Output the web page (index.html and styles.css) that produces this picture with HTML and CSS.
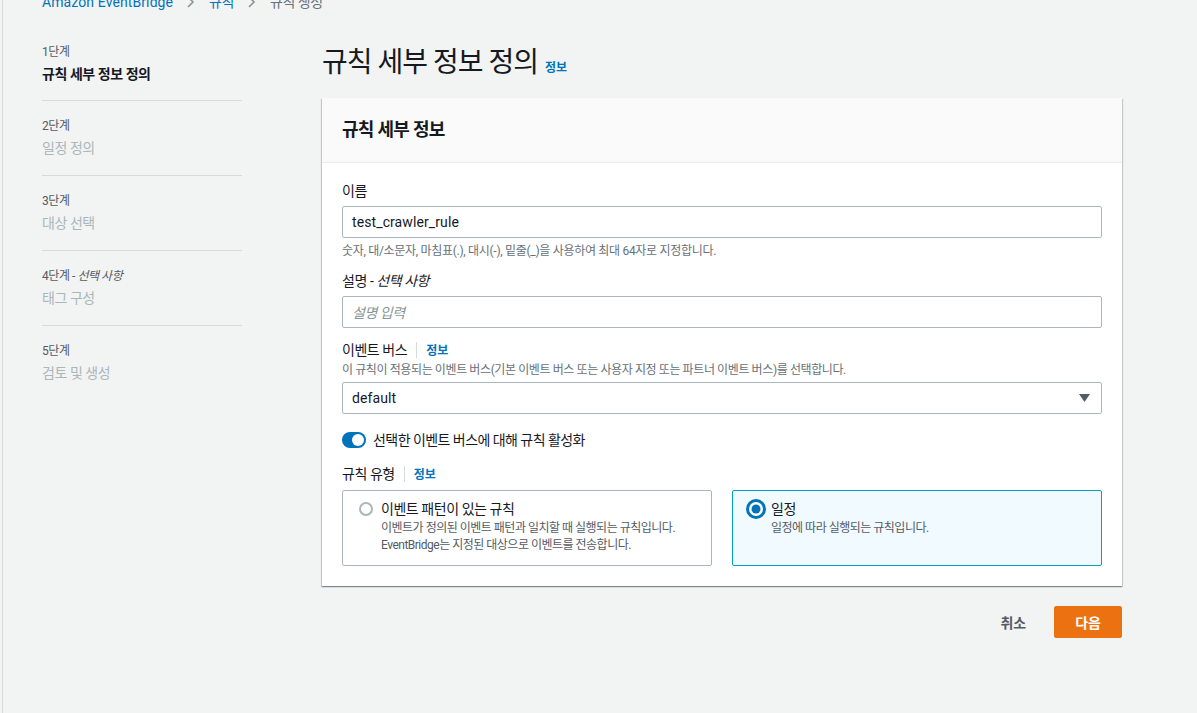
FILE: index.html
```html
<!DOCTYPE html>
<html lang="ko">
<head>
<meta charset="utf-8">
<title>규칙 생성</title>
<link rel="stylesheet" href="styles.css">
</head>
<body>
<div class="app">
  <nav class="breadcrumb">
    <a class="crumb-link latin" href="#">Amazon EventBridge</a>
    <svg class="chev" width="10" height="12" viewBox="0 0 10 12"><path d="M2 1l5 5-5 5" fill="none" stroke="#879596" stroke-width="1.6"/></svg>
    <a class="crumb-link" href="#">규칙</a>
    <svg class="chev" width="10" height="12" viewBox="0 0 10 12"><path d="M2 1l5 5-5 5" fill="none" stroke="#879596" stroke-width="1.6"/></svg>
    <span class="crumb-current">규칙 생성</span>
  </nav>
  <div class="layout">
    <aside class="steps">
      <div class="step">
        <div class="step-label">1단계</div>
        <div class="step-name current">규칙 세부 정보 정의</div>
      </div>
      <div class="step">
        <div class="step-label">2단계</div>
        <div class="step-name">일정 정의</div>
      </div>
      <div class="step">
        <div class="step-label">3단계</div>
        <div class="step-name">대상 선택</div>
      </div>
      <div class="step">
        <div class="step-label">4단계 - <i>선택 사항</i></div>
        <div class="step-name">태그 구성</div>
      </div>
      <div class="step last">
        <div class="step-label">5단계</div>
        <div class="step-name">검토 및 생성</div>
      </div>
    </aside>
    <main class="main">
      <h1 class="page-title">규칙 세부 정보 정의 <a class="info" href="#">정보</a></h1>
      <section class="card">
        <header class="card-header"><h2>규칙 세부 정보</h2></header>
        <div class="card-body">
          <div class="field">
            <div class="label">이름</div>
            <div class="input latin">test_crawler_rule</div>
            <div class="hint">숫자, 대/소문자, 마침표(.), 대시(-), 밑줄(_)을 사용하여 최대 64자로 지정합니다.</div>
          </div>
          <div class="field">
            <div class="label">설명 - <i>선택 사항</i></div>
            <div class="input placeholder">설명 입력</div>
          </div>
          <div class="field">
            <div class="label">이벤트 버스<span class="divider"></span><a class="info" href="#">정보</a></div>
            <div class="desc">이 규칙이 적용되는 이벤트 버스(기본 이벤트 버스 또는 사용자 지정 또는 파트너 이벤트 버스)를 선택합니다.</div>
            <div class="input select latin">default
              <svg width="11" height="8" viewBox="0 0 11 8"><path d="M0 0h11L5.5 8z" fill="#545b64"/></svg>
            </div>
          </div>
          <div class="toggle-row">
            <span class="toggle"><span class="knob"></span></span>
            <span>선택한 이벤트 버스에 대해 규칙 활성화</span>
          </div>
          <div class="field type-field">
            <div class="label">규칙 유형<span class="divider"></span><a class="info" href="#">정보</a></div>
            <div class="tiles">
              <div class="tile">
                <span class="radio-slot"><span class="radio"></span></span>
                <div class="tile-text">
                  <div class="tile-title">이벤트 패턴이 있는 규칙</div>
                  <div class="tile-desc">이벤트가 정의된 이벤트 패턴과 일치할 때 실행되는 규칙입니다.<br>EventBridge는 지정된 대상으로 이벤트를 전송합니다.</div>
                </div>
              </div>
              <div class="tile selected">
                <span class="radio-slot">
                  <svg width="20" height="20" viewBox="0 0 20 20"><circle cx="10" cy="10" r="10" fill="#0073bb"/><circle cx="10" cy="10" r="7" fill="#fff"/><circle cx="10" cy="10" r="4.5" fill="#0073bb"/></svg>
                </span>
                <div class="tile-text">
                  <div class="tile-title">일정</div>
                  <div class="tile-desc">일정에 따라 실행되는 규칙입니다.</div>
                </div>
              </div>
            </div>
          </div>
        </div>
      </section>
      <div class="actions">
        <button class="btn-link">취소</button>
        <button class="btn-primary">다음</button>
      </div>
    </main>
  </div>
</div>
</body>
</html>
```

FILE: styles.css
```css
* { box-sizing: border-box; }
html, body { margin: 0; padding: 0; }
body {
  background: #f2f3f3;
  font-family: "Roboto", "Noto Sans CJK KR", sans-serif;
  color: #16191f;
  font-size: 14px;
  letter-spacing: -0.45px;
  overflow: hidden;
}
a { text-decoration: none; }
.latin { letter-spacing: 0.1px; }
.app {
  display: flow-root;
  margin-left: 2px;
  border-left: 1px solid #d5dbdb;
  min-height: 100vh;
  padding-left: 39px;
}
.breadcrumb {
  display: flex;
  align-items: center;
  gap: 13px;
  height: 22px;
  margin-top: -9px;
  font-size: 14px;
  line-height: 22px;
}
.crumb-link { color: #0073bb; }
.crumb-current { color: #687078; }
.layout {
  display: flex;
  gap: 80px;
  margin-top: 29px;
}
.steps { width: 200px; flex: none; }
.step {
  padding: 16px 0;
  border-bottom: 1px solid #d5dbdb;
}
.step:first-child { padding-top: 1px; padding-bottom: 15px; }
.step.last { border-bottom: none; }
.step-label {
  font-size: 12px;
  line-height: 16px;
  color: #545b64;
  margin-bottom: 4px;
  padding-top: 1px;
  height: 17px;
}
.step-name {
  font-size: 14px;
  line-height: 22px;
  color: #aab7b8;
  margin-top: -1px;
}
.step-name.current { color: #16191f; font-weight: 700; }
.main { width: 800px; flex: none; }
.page-title {
  margin: 0 0 17px;
  height: 39px;
  padding-top: 3px;
  font-size: 28px;
  line-height: 36px;
  font-weight: 400;
  letter-spacing: -1px;
}
.page-title .info {
  font-size: 12px;
  line-height: 1;
  margin-left: 1px;
  letter-spacing: 0;
  vertical-align: baseline;
}
.info {
  color: #0073bb;
  font-size: 12px;
  font-weight: 700;
  letter-spacing: 0;
}
.card {
  background: #fff;
  box-shadow: 0 1px 1px 0 rgba(0,28,36,.3), 1px 1px 1px 0 rgba(0,28,36,.15), -1px 1px 1px 0 rgba(0,28,36,.15);
}
.card-header {
  background: #fafafa;
  padding: 20px;
  height: 65px;
  border-bottom: 1px solid #eaeded;
}
.card-header h2 {
  margin: 0;
  font-size: 18px;
  line-height: 24px;
  font-weight: 700;
  letter-spacing: -0.7px;
}
.card-body { padding: 17px 20px 20px; }
.field { margin-bottom: 11px; }
.label {
  font-size: 14px;
  line-height: 22px;
  height: 22px;
  margin-bottom: 4px;
}
.divider {
  display: inline-block;
  width: 1px;
  height: 16px;
  background: #d5dbdb;
  margin: 0 9px;
  vertical-align: -3px;
}
.input {
  height: 32px;
  border: 1px solid #aab7b8;
  border-radius: 2px;
  background: #fff;
  padding: 0 9px;
  display: flex;
  align-items: center;
  font-size: 14px;
}
.input.placeholder { color: #879596; font-style: italic; }
.input.select { justify-content: space-between; padding-right: 11px; }
.hint, .desc {
  font-size: 12px;
  line-height: 16px;
  height: 16px;
  color: #687078;
  letter-spacing: -0.4px;
}
.hint { margin-top: 5px; letter-spacing: -0.3px; }
.desc { margin-top: -3px; margin-bottom: 4px; }
.toggle-row {
  display: flex;
  align-items: center;
  gap: 7px;
  line-height: 22px;
  height: 22px;
  margin-top: 15px;
  margin-bottom: 12px;
  letter-spacing: -0.55px;
}
.toggle {
  width: 24px;
  height: 16px;
  border-radius: 8px;
  background: #0073bb;
  position: relative;
  flex: none;
}
.knob {
  position: absolute;
  right: 2px;
  top: 2px;
  width: 12px;
  height: 12px;
  border-radius: 50%;
  background: #fff;
}
.type-field { margin-bottom: 0; }
.type-field .label { margin-bottom: 5px; padding-top: 1px; height: 23px; margin-top: -1px; }
.tiles {
  display: grid;
  grid-template-columns: 1fr 1fr;
  gap: 20px;
}
.tile {
  height: 76px;
  border: 1px solid #aab7b8;
  border-radius: 2px;
  padding: 7px 12px 0 13px;
  display: flex;
  gap: 5px;
}
.tile.selected { border-color: #00a1c9; background: #f1faff; }
.radio-slot {
  width: 20px;
  height: 22px;
  display: flex;
  align-items: center;
  justify-content: center;
  flex: none;
}
.radio {
  width: 14px;
  height: 14px;
  border-radius: 50%;
  border: 2px solid #aab7b8;
  background: #fff;
}
.tile-title { font-size: 14px; line-height: 22px; }
.tile-desc { font-size: 12px; line-height: 17px; color: #545b64; letter-spacing: -0.5px; }
.actions {
  display: flex;
  justify-content: flex-end;
  gap: 8px;
  margin-top: 20px;
}
.btn-link, .btn-primary {
  height: 32px;
  padding: 0 20px;
  font: inherit;
  font-weight: 700;
  font-size: 14px;
  border: none;
  border-radius: 2px;
  letter-spacing: 0;
}
.btn-link { background: transparent; color: #545b64; }
.btn-primary { background: #ec7211; color: #fff; border: 1px solid #ec7211; }
```
